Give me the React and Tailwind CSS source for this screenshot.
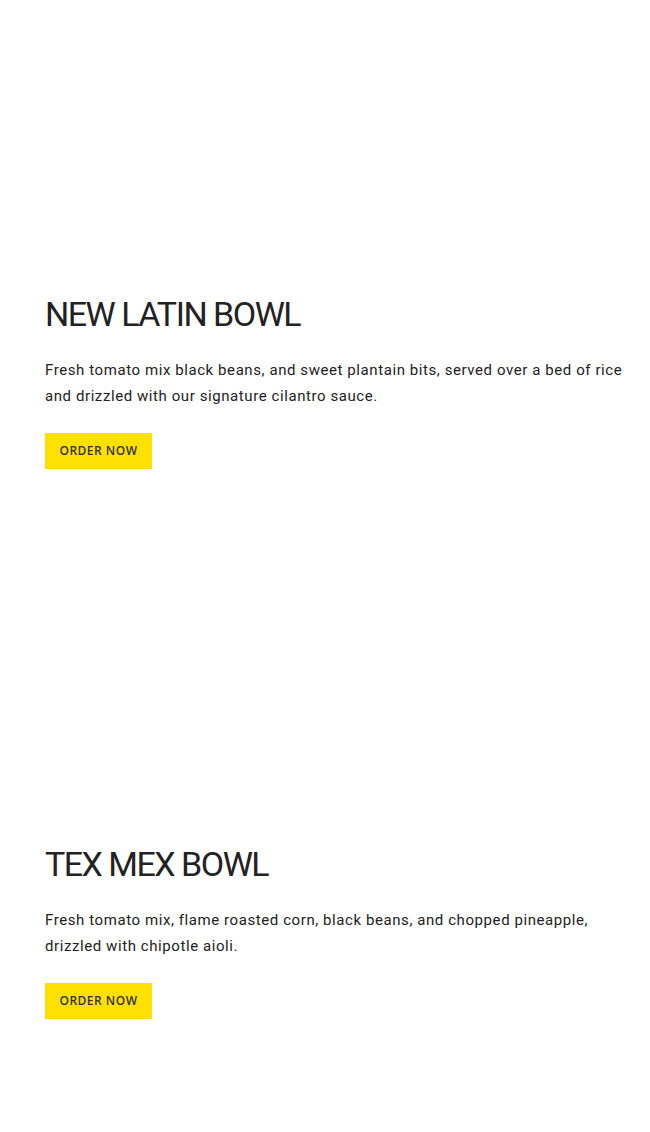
import React from 'react';

const items = [
  {
    title: 'NEW LATIN BOWL',
    text: 'Fresh tomato mix black beans, and sweet plantain bits, served over a bed of rice and drizzled with our signature cilantro sauce.',
  },
  {
    title: 'TEX MEX BOWL',
    text: 'Fresh tomato mix, flame roasted corn, black beans, and chopped pineapple, drizzled with chipotle aioli.',
  },
];

function MenuItem({ title, text }) {
  return (
    <section className="flex h-[550px] flex-col items-start pl-[45px] pr-[20px] pt-[293px] font-['Roboto',sans-serif]">
      <h2 className="text-[34px] leading-[42px] font-normal tracking-[-1.5px] text-[#222]">
        {title}
      </h2>
      <p className="mt-[22px] text-[15px] leading-[26px] tracking-[0.58px] text-[#222]">
        {text}
      </p>
      <button className="mt-[24px] h-[36px] w-[107px] bg-[#ffe000] font-['Open_Sans',sans-serif] text-[12px] font-semibold tracking-[0.5px] text-[#333]">
        ORDER NOW
      </button>
    </section>
  );
}

export default function App() {
  return (
    <div className="min-h-[1132px] bg-white">
      {items.map((item) => (
        <MenuItem key={item.title} {...item} />
      ))}
    </div>
  );
}
